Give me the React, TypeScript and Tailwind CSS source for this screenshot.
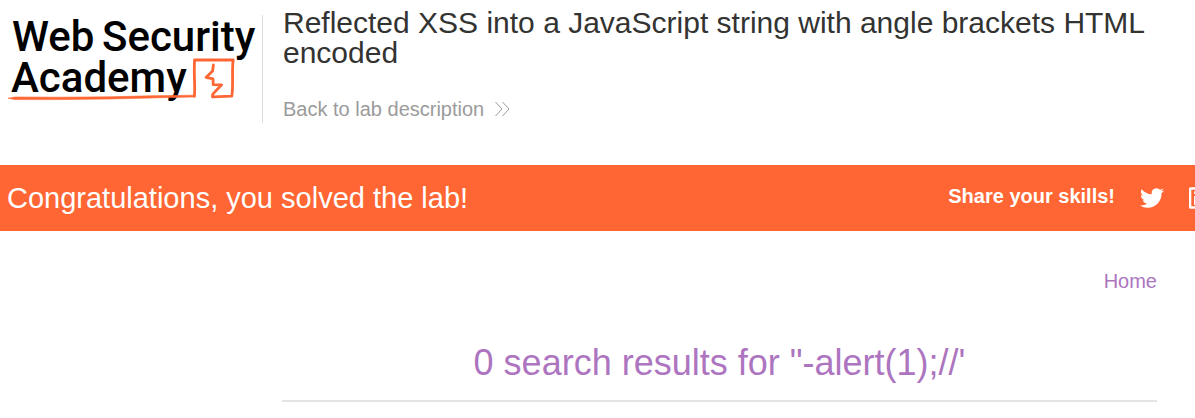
function Logo() {
  return (
    <svg viewBox="0 0 262 108" className="block h-[108px] w-[262px] overflow-visible" role="img" aria-label="Web Security Academy">
      <g fill="#000" fontFamily="Roboto, sans-serif" fontWeight="500" fontSize="42">
        <text x="12" y="36">Web</text>
        <text x="102" y="36">Security</text>
        <text x="11" y="77">Academy</text>
      </g>
      <path
        d="M8 83.2 L15 82 L60 82.2 L110 81.8 L150 80.8 L193.4 80.2 L193.6 82 L150 83 L110 84 L60 84.6 L15 84.6 Z"
        fill="#ff6633" stroke="#ff6633" strokeWidth="0.6" strokeLinejoin="round"
      />
      <path
        d="M194.4 81.4 C195.4 70 193.6 60 194.6 44.8 L233.2 45 C231.6 56 233.6 70 231.8 81.2 L212.6 81.8"
        fill="none" stroke="#ff6633" strokeWidth="2.8" strokeLinejoin="round" strokeLinecap="round"
      />
      <path
        d="M213.4 50 L212.6 56 L206 62.4 L213 63.8 L213.2 69.6 L221.6 69.8 L212.6 79.4 L212.6 81.8"
        fill="none" stroke="#ff6633" strokeWidth="2.8" strokeLinejoin="round" strokeLinecap="round"
      />
    </svg>
  );
}

function Chevrons() {
  return (
    <svg viewBox="0 0 16 16" className="h-4 w-4" fill="none" stroke="#9b9b9b" strokeWidth="1" aria-hidden="true">
      <path d="M1.5 1 L8 8 L1.5 15 M8.5 1 L15 8 L8.5 15" />
    </svg>
  );
}

function TwitterIcon() {
  return (
    <svg viewBox="0 0 24 24" className="h-6 w-6" fill="#fff" aria-hidden="true">
      <path d="M23.953 4.57a10 10 0 01-2.825.775 4.958 4.958 0 002.163-2.723c-.951.555-2.005.959-3.127 1.184a4.92 4.92 0 00-8.384 4.482C7.69 8.095 4.067 6.13 1.64 3.162a4.822 4.822 0 00-.666 2.475c0 1.71.87 3.213 2.188 4.096a4.904 4.904 0 01-2.228-.616v.06a4.923 4.923 0 003.946 4.827 4.996 4.996 0 01-2.212.085 4.936 4.936 0 004.604 3.417 9.867 9.867 0 01-6.102 2.105c-.39 0-.779-.023-1.17-.067a13.995 13.995 0 007.557 2.209c9.053 0 13.998-7.496 13.998-13.985 0-.21 0-.42-.015-.63A9.935 9.935 0 0024 4.59z" />
    </svg>
  );
}

function LinkedInIcon() {
  return (
    <svg viewBox="0 0 24 24" className="h-6 w-6" aria-hidden="true">
      <rect x="1" y="2.5" width="21" height="19" rx="1" fill="none" stroke="#fff" strokeWidth="2.6" />
      <path d="M5 10h3v9H5zM5 5.5h3v2.5H5zM10 10h3v1.5c1.5-2.4 6-2 6 2V19h-3v-5c0-2-3-2-3 0v5h-3z" fill="#fff" />
    </svg>
  );
}

export default function App() {
  return (
    <div className="overflow-hidden bg-white font-['Liberation_Sans',Arial,sans-serif] text-[#333332]">
      <header className="flex pb-[42px]">
        <a href="#academy" className="mt-[15px] shrink-0 border-r border-[#dddddd]">
          <Logo />
        </a>
        <div className="ml-5 mr-8 mt-2 min-w-0 flex-1">
          <h1 className="text-[30px] leading-[30px]">
            Reflected XSS into a JavaScript string with angle brackets HTML encoded
          </h1>
          <a href="#description" className="mt-[29px] inline-flex items-center gap-[10px] text-[20px] leading-6 text-[#9b9b9b]">
            Back to lab description
            <Chevrons />
          </a>
        </div>
      </header>

      <section className="flex h-[66px] items-center justify-between bg-[#ff6633] pl-[7px] text-white">
        <p className="text-[29px] leading-[30px]">Congratulations, you solved the lab!</p>
        <div className="-mr-[18px] flex shrink-0 items-center gap-[25px]">
          <span className="pb-1 text-[20px] font-bold leading-6">Share your skills!</span>
          <a href="#twitter" aria-label="Share on Twitter"><TwitterIcon /></a>
          <a href="#linkedin" aria-label="Share on LinkedIn"><LinkedInIcon /></a>
        </div>
      </section>

      <main className="ml-[282px] mr-[38px] pb-4 pt-[38px] text-[#ad75c0]">
        <nav className="text-right text-[20px] leading-6">
          <a href="#home">Home</a>
        </nav>
        <h2 className="mt-[50px] border-b-2 border-[#e4e4e4] pb-[17px] text-center text-[36px] leading-10">
          0 search results for "-alert(1);//'
        </h2>
      </main>
    </div>
  );
}
